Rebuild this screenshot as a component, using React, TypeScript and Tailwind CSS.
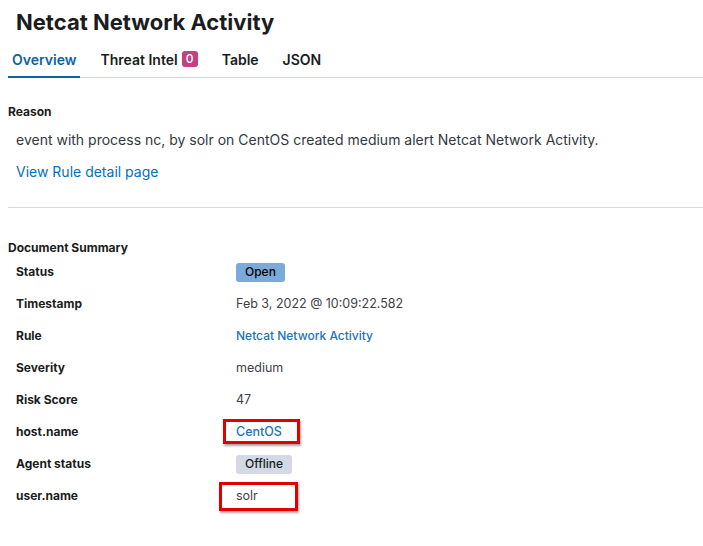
import React from "react";

function Row({ label, children, box }: { label: string; children: React.ReactNode; box?: React.ReactNode }) {
  return (
    <div className="flex h-[32px] items-center">
      <div className="w-[228px] pl-2 text-[12px] font-bold text-[#1a1c21]">{label}</div>
      <div className="relative flex h-full items-center text-[12.5px] text-[#3f4249]">
        {children}
        {box}
      </div>
    </div>
  );
}

export default function App() {
  return (
    <div className="w-[703px] h-[546px] bg-white overflow-hidden" style={{ fontFamily: "Inter, 'Noto Sans', sans-serif" }}>
      <h1 className="pl-4 pt-[8px] text-[22px] font-bold leading-[28px] text-[#1a1c21]">Netcat Network Activity</h1>
      <div className="ml-2 mt-[7px] flex gap-4 border-b border-[#d3dae6] h-[35px]">
        <div className="relative flex items-center px-1 pb-[2px] text-[14px] font-semibold text-[#0b64a8]">
          Overview
          <div className="absolute bottom-[-1px] left-0 right-0 h-[2px] bg-[#0b64a8]" />
        </div>
        <div className="flex items-center px-1 pb-[2px] text-[14px] font-semibold text-[#1a1c21]">
          Threat Intel
          <span className="ml-1 inline-flex h-[16px] min-w-[16px] items-center justify-center rounded-[3px] bg-[#c5407e] px-1 text-[12px] font-medium text-white">0</span>
        </div>
        <div className="flex items-center px-1 pb-[2px] text-[14px] font-semibold text-[#1a1c21]">Table</div>
        <div className="flex items-center px-1 pb-[2px] text-[14px] font-semibold text-[#1a1c21]">JSON</div>
      </div>
      <div className="pl-2">
        <div className="mt-[25px] text-[12px] font-bold leading-[18px] text-[#1a1c21]">Reason</div>
        <div className="mt-[9px] pl-2 text-[14px] leading-[20px] text-[#343741]">
          event with process nc, by solr on CentOS created medium alert Netcat Network Activity.
        </div>
        <div className="mt-[12px] pl-2 text-[14px] leading-[20px] text-[#0071c2]">View Rule detail page</div>
        <div className="mt-[25px] h-px bg-[#d3dae6]" />
        <div className="mt-[31px] text-[12px] font-bold leading-[18px] text-[#1a1c21]">Document Summary</div>
        <div className="mt-[-1px]">
          <Row label="Status">
            <span className="inline-flex h-[19px] items-center rounded-[3px] bg-[#79aad9] px-[9px] text-[12px] font-medium text-[#000]">Open</span>
          </Row>
          <Row label="Timestamp">Feb 3, 2022 @ 10:09:22.582</Row>
          <Row label="Rule">
            <span className="text-[12px] font-medium text-[#1a73c0]">Netcat Network Activity</span>
          </Row>
          <Row label="Severity">medium</Row>
          <Row label="Risk Score">47</Row>
          <Row
            label="host.name"
            box={<span className="absolute left-[-13px] top-[3px] h-[25px] w-[77px] border-[3px] border-[#e00000] shadow-[1px_2px_2px_rgba(0,0,0,0.35)]" />}
          >
            <span className="font-medium text-[#1a73c0]">CentOS</span>
          </Row>
          <Row label="Agent status">
            <span className="inline-flex h-[19px] items-center rounded-[3px] bg-[#d3dae6] px-[9px] text-[12px] font-medium text-[#1a1c21]">Offline</span>
          </Row>
          <Row
            label="user.name"
            box={<span className="absolute left-[-17px] top-[2px] h-[29px] w-[79px] border-[3px] border-[#e00000] shadow-[1px_2px_2px_rgba(0,0,0,0.35)]" />}
          >
            solr
          </Row>
        </div>
      </div>
    </div>
  );
}
